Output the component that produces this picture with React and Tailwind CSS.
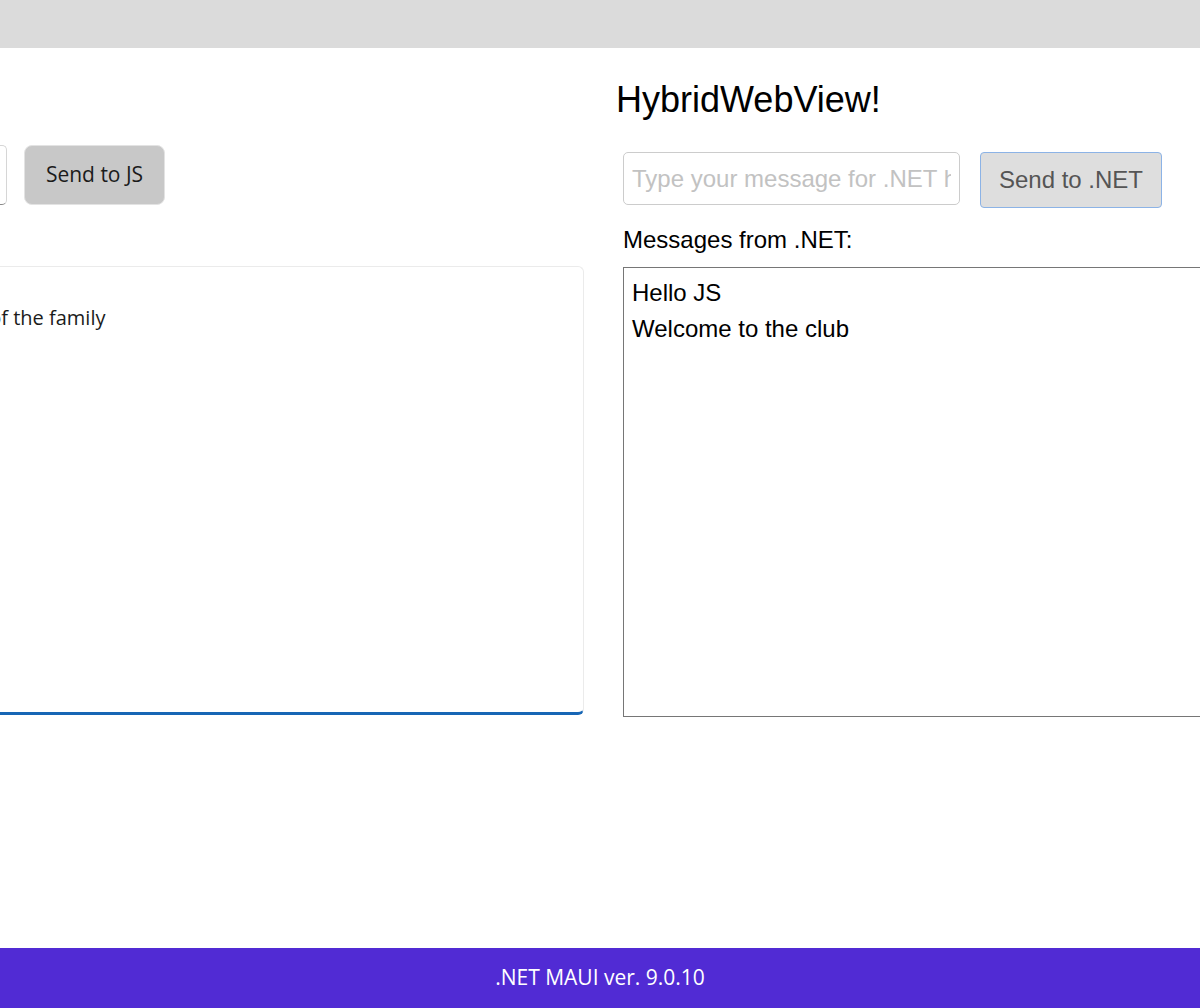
import { useState } from "react";

const openSans = { fontFamily: '"Open Sans", "Noto Sans", sans-serif' };

function LeftPanel() {
  return (
    <div className="flex-none w-[800px] -ml-[216px] pt-[97px]" style={openSans}>
      <div className="flex items-start gap-[17px] ml-[23px]">
        <div className="w-[200px] h-[60px] rounded-[5px] border border-[#d6d6d6] border-b-[#8a8a8a] bg-white" />
        <button className="w-[141px] h-[60px] rounded-[8px] bg-[#c8c8c8] border border-[#e3e3e3] text-[21px] text-[#1b1b1b]">
          Send to JS
        </button>
      </div>
      <div className="mt-[61px] h-[449px] w-full rounded-[6px] border border-[#ebebeb] border-b-[3px] border-b-[#1766b5] bg-white pl-[39px] pt-[36px] text-[20px] leading-[30px] text-[#1b1b1b]">
        <div>You are now part of the family</div>
      </div>
    </div>
  );
}

function RightPanel() {
  const [message, setMessage] = useState("");
  return (
    <div className="flex-none ml-[32px] pt-[31px]" style={{ fontFamily: '"Liberation Sans", Arial, sans-serif' }}>
      <h1 className="text-[36px] leading-[41px] text-black">HybridWebView!</h1>
      <div className="mt-[32px] ml-[7px] flex items-start">
        <input
          type="text"
          value={message}
          onChange={(e) => setMessage(e.target.value)}
          placeholder="Type your message for .NET here"
          className="w-[337px] h-[53px] rounded-[5px] border border-[#cccccc] px-2 text-[24px] text-black placeholder:text-[#c2c2c2] outline-none"
        />
        <button className="ml-[20px] w-[182px] h-[56px] rounded-[4px] border border-[#8cb3e6] bg-[#dedede] text-[24px] text-[#555555]">
          Send to .NET
        </button>
      </div>
      <div className="mt-[18px] ml-[7px] text-[24px] leading-[27px] text-black">Messages from .NET:</div>
      <div className="mt-[14px] ml-[7px] w-[620px] h-[450px] border border-[#767676] px-[8px] pt-[7px] text-[24px] leading-[36px] text-black">
        <div>Hello JS</div>
        <div>Welcome to the club</div>
      </div>
    </div>
  );
}

export default function App() {
  return (
    <div className="w-[1200px] h-[1008px] flex flex-col overflow-hidden bg-white">
      <div className="h-12 flex-none bg-[#dbdbdb]" />
      <div className="flex flex-1 overflow-hidden">
        <LeftPanel />
        <RightPanel />
      </div>
      <div
        className="h-[60px] flex-none bg-[#512bd4] flex items-center justify-center text-white text-[21px]"
        style={openSans}
      >
        .NET MAUI ver. 9.0.10
      </div>
    </div>
  );
}
